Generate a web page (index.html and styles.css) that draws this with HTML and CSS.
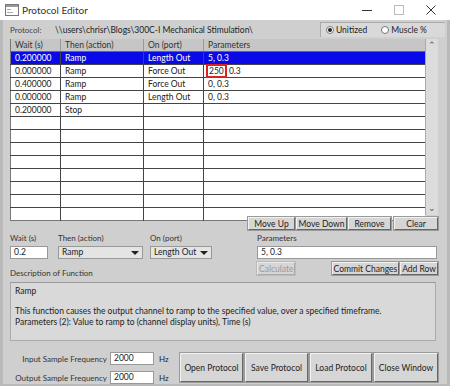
FILE: index.html
```html
<!doctype html>
<html>
    <head>
        <meta charset="utf-8">
        <title>Protocol Editor</title>
        <link rel="stylesheet" href="styles.css">
    </head>
    <body>
        <div id="frame">
            <!-- Title bar -->
            <div class="titlebar">
                <svg class="app-icon" width="14" height="12" viewBox="0 0 14 12">
                    <rect x="0.5" y="0.5" width="13" height="11" fill="#fff" stroke="#777"/>
                    <rect x="1" y="1" width="12" height="2" fill="#999"/>
                    <rect x="2" y="5" width="4" height="1" fill="#aaa"/>
                    <rect x="2" y="8" width="6" height="1" fill="#aaa"/>
                </svg>
                <span class="title">Protocol Editor</span>
                <span class="controls">
                    <svg width="10" height="10" viewBox="0 0 10 10"><line x1="0" y1="5.5" x2="10" y2="5.5" stroke="#333"/></svg>
                    <svg width="10" height="10" viewBox="0 0 10 10"><rect x="0.5" y="0.5" width="9" height="9" fill="none" stroke="#bbb"/></svg>
                    <svg width="10" height="10" viewBox="0 0 10 10"><path d="M0.5 0.5 L9.5 9.5 M9.5 0.5 L0.5 9.5" stroke="#333"/></svg>
                </span>
            </div>

            <div class="window">
                <!-- Protocol path + units -->
                <div class="proto-row">
                    <span class="proto-label">Protocol:</span>
                    <span class="proto-path">\\users\chrisr\Blogs\300C-I Mechanical Stimulation\</span>
                    <div class="units">
                        <label class="radio"><span class="dot on"></span>Unitized</label>
                        <label class="radio"><span class="dot"></span>Muscle %</label>
                    </div>
                </div>

                <!-- Step list -->
                <div class="grid-wrap">
                    <table class="steps">
                        <colgroup>
                            <col class="c-wait"><col class="c-then"><col class="c-on"><col>
                        </colgroup>
                        <thead>
                            <tr><th>Wait (s)</th><th>Then (action)</th><th>On (port)</th><th>Parameters</th></tr>
                        </thead>
                        <tbody>
                            <tr class="selected"><td>0.200000</td><td>Ramp</td><td>Length Out</td><td>5, 0.3</td></tr>
                            <tr><td>0.000000</td><td>Ramp</td><td>Force Out</td><td><span class="mark">250</span>, 0.3</td></tr>
                            <tr><td>0.400000</td><td>Ramp</td><td>Force Out</td><td>0, 0.3</td></tr>
                            <tr><td>0.000000</td><td>Ramp</td><td>Length Out</td><td>0, 0.3</td></tr>
                            <tr><td>0.200000</td><td>Stop</td><td></td><td></td></tr>
                            <tr><td></td><td></td><td></td><td></td></tr>
                            <tr><td></td><td></td><td></td><td></td></tr>
                            <tr><td></td><td></td><td></td><td></td></tr>
                            <tr><td></td><td></td><td></td><td></td></tr>
                            <tr><td></td><td></td><td></td><td></td></tr>
                            <tr><td></td><td></td><td></td><td></td></tr>
                            <tr><td></td><td></td><td></td><td></td></tr>
                            <tr class="last"><td></td><td></td><td></td><td></td></tr>
                        </tbody>
                    </table>
                    <div class="scrollbar">
                        <span class="arrow">&#8963;</span>
                        <span class="arrow">&#8964;</span>
                    </div>
                </div>

                <div class="btn-row">
                    <button class="btn w-up">Move Up</button>
                    <button class="btn w-down">Move Down</button>
                    <button class="btn w-remove">Remove</button>
                    <button class="btn w-clear">Clear</button>
                </div>

                <!-- Edit fields -->
                <div class="edit">
                    <div class="edit-left">
                        <div class="fields">
                            <div class="field f-wait">
                                <span class="lbl">Wait (s)</span>
                                <span class="input">0.2</span>
                            </div>
                            <div class="field f-then">
                                <span class="lbl">Then (action)</span>
                                <span class="select">Ramp<span class="caret"></span></span>
                            </div>
                            <div class="field f-on">
                                <span class="lbl">On (port)</span>
                                <span class="select">Length Out<span class="caret"></span></span>
                            </div>
                        </div>
                        <div class="lbl desc-lbl">Description of Function</div>
                    </div>
                    <div class="edit-right">
                        <span class="lbl">Parameters</span>
                        <span class="input">5, 0.3</span>
                        <div class="param-btns">
                            <button class="btn disabled">Calculate</button>
                            <span class="spacer"></span>
                            <button class="btn">Commit Changes</button>
                            <button class="btn">Add Row</button>
                        </div>
                    </div>
                </div>

                <div class="desc">
                    <p>Ramp</p>
                    <p class="gap">This function causes the output channel to ramp to the specified value, over a specified timeframe.</p>
                    <p>Parameters (2): Value to ramp to (channel display units), Time (s)</p>
                </div>

                <!-- Sample rates + file buttons -->
                <div class="bottom">
                    <div class="freqs">
                        <div class="freq"><span class="flbl">Input Sample Frequency</span><span class="input">2000</span><span class="hz">Hz</span></div>
                        <div class="freq"><span class="flbl">Output Sample Frequency</span><span class="input">2000</span><span class="hz">Hz</span></div>
                    </div>
                    <div class="file-btns">
                        <button class="btn big w-open">Open Protocol</button>
                        <button class="btn big w-save">Save Protocol</button>
                        <button class="btn big w-load">Load Protocol</button>
                        <button class="btn big w-close">Close Window</button>
                    </div>
                </div>
            </div>
        </div>
    </body>
</html>
```
FILE: styles.css
```css
* {
    margin: 0;
    padding: 0;
    box-sizing: border-box;
    font-family: "Lato", "Noto Sans", sans-serif;
    font-size: 8.5px;
    color: #222;
}
body {
    width: 450px;
    height: 386px;
    overflow: hidden;
    background: #fff;
}
#frame {
    width: 450px;
    height: 386px;
    display: flex;
    flex-direction: column;
}

/* title bar */
.titlebar {
    height: 20px;
    background: #fff;
    display: flex;
    align-items: center;
    padding-left: 5px;
}
.app-icon {
    margin-right: 3px;
}
.title {
    font-size: 10px;
    color: #333;
}
.controls {
    margin-left: auto;
    display: flex;
    gap: 22px;
    padding-right: 14px;
}

/* window body */
.window {
    flex: 1;
    background: #cfcfcf;
    border-left: 3px solid #b9b9b9;
    border-right: 3px solid #b9b9b9;
    border-bottom: 2px solid #b9b9b9;
    padding: 1px 9px 0 7px;
}
.proto-row {
    height: 17px;
    display: flex;
    align-items: center;
}
.proto-label {
    width: 45px;
    color: #444;
    font-size: 8px;
}
.proto-path {
    font-size: 8.5px;
}
.units {
    margin-left: auto;
    margin-right: -7px;
    height: 15px;
    width: 125px;
    background: #d9d9d9;
    border-top: 1px solid #aaa;
    border-left: 1px solid #aaa;
    display: flex;
    align-items: center;
    gap: 14px;
    padding-left: 5px;
}
.radio {
    display: flex;
    align-items: center;
    gap: 2px;
}
.dot {
    width: 8px;
    height: 8px;
    border-radius: 50%;
    background: #fff;
    border: 1px solid #777;
    display: inline-flex;
    align-items: center;
    justify-content: center;
}
.dot.on::after {
    content: "";
    width: 4px;
    height: 4px;
    border-radius: 50%;
    background: #222;
}

/* step table */
.grid-wrap {
    display: flex;
    height: 176px;
    margin-top: 1px;
}
.steps {
    width: 415px;
    border-collapse: collapse;
    table-layout: fixed;
    background: #fff;
    border-left: 1px solid #777;
    border-bottom: 1px solid #777;
    height: 176px;
}
.c-wait { width: 50px; }
.c-then { width: 83px; }
.c-on { width: 60px; }
.steps th {
    background: #c6c6c6;
    height: 12px;
    text-align: left;
    font-weight: normal;
    padding: 0 0 0 4px;
    border-right: 1px solid #999;
    border-bottom: 1px solid #666;
    color: #333;
}
.steps td {
    height: 13px;
    padding: 0 0 0 4px;
    border-right: 1px solid #444;
    border-bottom: 1px solid #444;
    white-space: nowrap;
}
.steps td:last-child, .steps th:last-child {
    border-right: none;
}
.steps tr.last td {
    border-bottom: none;
}
.steps tr.selected td {
    background: #0a0ae8;
    color: #fff;
}
.mark {
    outline: 2px solid #e02020;
    outline-offset: 0;
    padding: 0 1px;
}
.scrollbar {
    width: 13px;
    background: #dcdcdc;
    border-left: 1px solid #aaa;
    display: flex;
    flex-direction: column;
    justify-content: space-between;
    align-items: center;
    padding: 0 0 1px;
}
.arrow {
    font-size: 9px;
    color: #555;
    line-height: 12px;
}

/* buttons */
.btn {
    background: #d6d6d6;
    border: 1px solid;
    border-color: #f2f2f2 #666 #666 #f2f2f2;
    box-shadow: 0 0 0 1px #9a9a9a;
    font-size: 8.5px;
    height: 13px;
    padding: 0 1px;
    color: #222;
    white-space: nowrap;
}
.btn.disabled {
    color: #999;
    border-color: #e8e8e8 #aaa #aaa #e8e8e8;
    box-shadow: 0 0 0 1px #bbb;
}
.btn-row {
    display: flex;
    justify-content: flex-end;
    gap: 1px;
    margin-top: 2px;
    height: 13px;
}
.w-up { width: 47px; }
.w-down { width: 51px; }
.w-remove { width: 43px; }
.w-clear { width: 44px; margin-left: 2px; }

/* edit area */
.edit {
    display: flex;
    margin-top: 3px;
}
.edit-left {
    width: 247px;
}
.fields {
    display: flex;
}
.field {
    display: flex;
    flex-direction: column;
    gap: 2px;
}
.f-wait { width: 48px; }
.f-then { width: 92px; }
.f-on { width: 62px; }
.lbl {
    height: 11px;
    line-height: 11px;
    color: #333;
    font-size: 8px;
}
.input {
    display: block;
    background: #fff;
    border: 1px solid #999;
    height: 13px;
    line-height: 11px;
    padding-left: 3px;
}
.f-wait .input { width: 38px; }
.select {
    position: relative;
    display: block;
    background: #e4e4e4;
    border: 1px solid #999;
    height: 13px;
    line-height: 11px;
    padding-left: 3px;
}
.f-then .select { width: 85px; }
.f-on .select { width: 62px; }
.caret {
    position: absolute;
    right: 3px;
    top: 4px;
    border-left: 4px solid transparent;
    border-right: 4px solid transparent;
    border-top: 4px solid #222;
}
.desc-lbl {
    margin-top: 9px;
}
.edit-right {
    flex: 1;
    display: flex;
    flex-direction: column;
    gap: 2px;
}
.edit-right .input {
    width: 180px;
}
.param-btns {
    display: flex;
    margin-top: 1px;
    gap: 1px;
}
.param-btns .spacer {
    flex: 1;
}
.desc {
    margin-top: 3px;
    height: 59px;
    width: 426px;
    background: #d9d9d9;
    border: 1px solid #aaa;
    border-top-color: #999;
    padding: 3px 4px;
}
.desc p {
    line-height: 11px;
}
.desc p.gap {
    margin-top: 9px;
}

/* bottom */
.bottom {
    display: flex;
    margin-top: 8px;
}
.freqs {
    width: 171px;
    display: flex;
    flex-direction: column;
    gap: 6px;
    padding-top: 3px;
}
.freq {
    display: flex;
    align-items: center;
}
.flbl {
    width: 100px;
    text-align: right;
    padding-right: 3px;
    color: #333;
    font-size: 8px;
}
.freq .input {
    width: 44px;
}
.hz {
    margin-left: 5px;
    font-size: 8px;
}
.file-btns {
    display: flex;
    gap: 2px;
    margin-top: 4px;
}
.btn.big {
    height: 29px;
    font-size: 8.5px;
}
.w-open { width: 63px; }
.w-save { width: 63px; }
.w-load { width: 62px; }
.w-close { width: 64px; }
```
